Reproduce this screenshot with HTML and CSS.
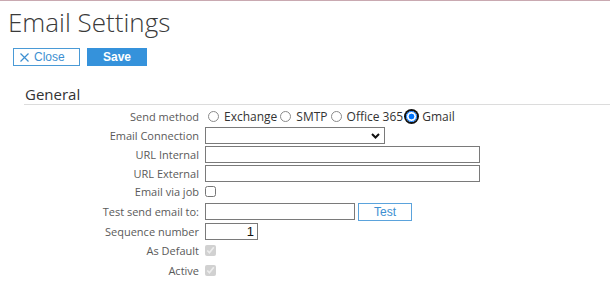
FILE: index.html
```html
<!DOCTYPE html>
<html lang="en">
<head>
    <meta charset="UTF-8">
    <meta name="viewport" content="width=device-width, initial-scale=1.0">
    <title>Email Settings</title>
    <link rel="stylesheet" href="styles.css">
</head>
<body>
    <div class="topline"></div>
    <div class="page">
        <h1 class="title">Email Settings</h1>
        <div class="toolbar">
            <button class="btn btn-outline">
                <svg class="close-icon" width="9" height="9" viewBox="0 0 9 9">
                    <path d="M0.5 0.5 L8.5 8.5 M8.5 0.5 L0.5 8.5" stroke="#3d8fd1" stroke-width="1.2" fill="none"/>
                </svg>
                Close
            </button>
            <button class="btn btn-primary">Save</button>
        </div>

        <div class="section">
            <h2 class="section-title">General</h2>
            <div class="form">
                <label class="form-label">Send method</label>
                <div class="field radios">
                    <input type="radio" name="method" id="m-exchange"><label for="m-exchange">Exchange</label>
                    <input type="radio" name="method" id="m-smtp"><label for="m-smtp">SMTP</label>
                    <input type="radio" name="method" id="m-office"><label for="m-office">Office 365</label>
                    <input type="radio" name="method" id="m-gmail" class="focused" checked><label for="m-gmail">Gmail</label>
                </div>

                <label class="form-label">Email Connection</label>
                <div class="field">
                    <span class="select-wrap">
                        <select class="select"><option></option></select>
                        <svg class="chevron" width="9" height="6" viewBox="0 0 9 6">
                            <path d="M1 1 L4.5 4.5 L8 1" stroke="#111" stroke-width="2" fill="none"/>
                        </svg>
                    </span>
                </div>

                <label class="form-label">URL Internal</label>
                <div class="field"><input type="text" class="text-input wide"></div>

                <label class="form-label">URL External</label>
                <div class="field"><input type="text" class="text-input wide"></div>

                <label class="form-label">Email via job</label>
                <div class="field"><input type="checkbox" class="check"></div>

                <label class="form-label">Test send email to:</label>
                <div class="field">
                    <input type="text" class="text-input medium">
                    <button class="btn btn-outline btn-test">Test</button>
                </div>

                <label class="form-label">Sequence number</label>
                <div class="field"><input type="text" class="text-input number" value="1"></div>

                <label class="form-label">As Default</label>
                <div class="field"><input type="checkbox" class="check" checked disabled></div>

                <label class="form-label">Active</label>
                <div class="field"><input type="checkbox" class="check" checked disabled></div>
            </div>
        </div>
    </div>
</body>
</html>
```

FILE: styles.css
```css
body {
    margin: 0;
    font-family: "Open Sans", Arial, sans-serif;
    background: #fff;
    color: #333;
}

.topline {
    height: 1px;
    background: #c9a9b1;
}

.page {
    padding-left: 8px;
}

.title {
    margin: 6px 0 0 0;
    font-size: 26px;
    font-weight: 300;
    line-height: 30px;
    color: #3a3a3a;
}

.toolbar {
    display: flex;
    gap: 7px;
    margin: 11px 0 0 5px;
}

.btn {
    box-sizing: border-box;
    height: 18px;
    font-family: "Liberation Sans", Arial, sans-serif;
    font-size: 12px;
    padding: 0;
    cursor: pointer;
    display: inline-flex;
    align-items: center;
    justify-content: center;
}

.btn-outline {
    width: 67px;
    background: #fff;
    border: 1px solid #4a9ad6;
    color: #3d8fd1;
    justify-content: flex-start;
    padding-left: 6px;
}

.close-icon {
    margin-right: 5px;
}

.btn-primary {
    width: 60px;
    background: #3592db;
    border: 1px solid #3592db;
    color: #fff;
    font-weight: bold;
}

.section {
    margin: 18px 0 0 16px;
}

.section-title {
    margin: 0;
    font-size: 15px;
    font-weight: 400;
    line-height: 20px;
    color: #333;
    padding-left: 1px;
    border-bottom: 1px solid #dcdcdc;
}

.form {
    display: grid;
    grid-template-columns: 175px 1fr;
    grid-template-rows: 20px 19px 19px 18px 19px 21px 19px 19px 20px;
    column-gap: 6px;
    margin-top: 1px;
}

.form-label {
    align-self: center;
    text-align: right;
    font-size: 11px;
    color: #5a5a5a;
}

.field {
    display: flex;
    align-items: center;
}

.radios label {
    font-size: 12px;
    color: #333;
}

.radios input {
    appearance: none;
    box-sizing: border-box;
    width: 11px;
    height: 11px;
    margin: 0 5px 0 3px;
    border: 1px solid #8a8a8a;
    border-radius: 50%;
    background: #fff;
}

.radios input:checked {
    border: 1.5px solid #0075ff;
    background: radial-gradient(circle, #0075ff 0 2.6px, #fff 3.2px);
}

.radios .focused {
    box-shadow: 0 0 0 2px #111;
}

.select-wrap {
    position: relative;
    display: inline-block;
    height: 17px;
}

.select {
    appearance: none;
    box-sizing: border-box;
    width: 180px;
    height: 17px;
    border: 1px solid #7a7a7a;
    border-radius: 0;
    background: #fff;
    margin: 0;
    display: block;
}

.chevron {
    position: absolute;
    right: 5px;
    top: 6px;
}

.text-input {
    box-sizing: border-box;
    height: 17px;
    border: 1px solid #7a7a7a;
    border-radius: 0;
    margin: 0;
    padding: 0 3px;
    font-family: "Liberation Sans", Arial, sans-serif;
    font-size: 13px;
    color: #111;
}

.wide {
    width: 275px;
}

.medium {
    width: 150px;
}

.number {
    width: 53px;
    text-align: right;
}

.btn-test {
    width: 54px;
    margin-left: 3px;
    padding-left: 0;
    justify-content: center;
    border-color: #5ba3dc;
}

.check {
    width: 11px;
    height: 11px;
    margin: 0;
}
```
